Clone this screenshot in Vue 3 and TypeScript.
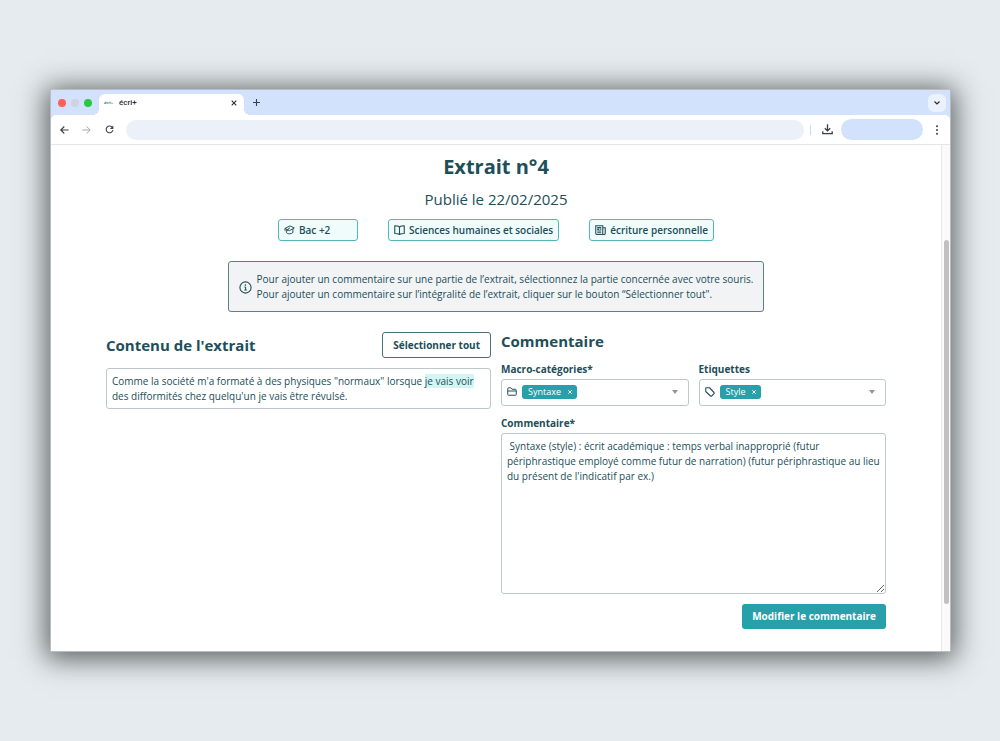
<script setup lang="ts">
import { ref } from 'vue'

interface TagField {
  id: string
  label: string
  icon: 'folder' | 'tag'
  tags: string[]
  options: string[]
}

const fields = ref<TagField[]>([
  { id: 'macro', label: 'Macro-catégories*', icon: 'folder', tags: ['Syntaxe'], options: ['Syntaxe', 'Lexique', 'Orthographe'] },
  { id: 'labels', label: 'Etiquettes', icon: 'tag', tags: ['Style'], options: ['Style', 'Accord', 'Temps'] },
])

const comment = ref(
  " Syntaxe (style) : écrit académique : temps verbal inapproprié (futur périphrastique employé comme futur de narration) (futur périphrastique au lieu du présent de l'indicatif par ex.)",
)

function removeTag(field: TagField, tag: string): void {
  field.tags = field.tags.filter((t) => t !== tag)
}

function addTag(field: TagField, event: Event): void {
  const select = event.target as HTMLSelectElement
  if (select.value && !field.tags.includes(select.value)) field.tags.push(select.value)
  select.value = ''
}
</script>

<template>
  <div class="desktop">
    <div class="window">
      <div class="chrome">
        <header class="tabstrip">
          <div class="lights">
            <span class="light red"></span>
            <span class="light grey"></span>
            <span class="light green"></span>
          </div>
          <div class="tab">
            <svg class="favicon" viewBox="0 0 11 6" aria-hidden="true">
              <text x="0" y="4" class="logo"><tspan fill="#1f8f8f">éc</tspan><tspan fill="#3c9a6e">ri</tspan><tspan fill="#ee8a2c">+</tspan></text>
            </svg>
            <span class="tab-title">écri+</span>
            <button class="icon-btn" type="button" aria-label="Fermer l'onglet">
              <svg width="6" height="6" viewBox="0 0 6 6"><path d="M.7.7l4.6 4.6M5.3.7L.7 5.3" stroke="#2b2d30" stroke-width="1.1" /></svg>
            </button>
          </div>
          <button class="icon-btn new-tab" type="button" aria-label="Nouvel onglet">
            <svg width="7" height="7" viewBox="0 0 7 7"><path d="M3.5 0v7M0 3.5h7" stroke="#3c4043" stroke-width="1.1" /></svg>
          </button>
          <button class="icon-btn tab-menu" type="button" aria-label="Rechercher dans les onglets">
            <svg width="6" height="4" viewBox="0 0 6 4"><path d="M.5.5L3 3 5.5.5" fill="none" stroke="#2b2d30" stroke-width="1.2" /></svg>
          </button>
        </header>

        <nav class="toolbar">
          <button class="icon-btn" type="button" aria-label="Précédent">
            <svg width="9" height="8" viewBox="0 0 9 8"><path d="M8.6 4H1M4.3.5L.8 4l3.5 3.5" fill="none" stroke="#3c4043" stroke-width="1.1" /></svg>
          </button>
          <button class="icon-btn forward" type="button" aria-label="Suivant">
            <svg width="9" height="8" viewBox="0 0 9 8"><path d="M.4 4H8M4.7.5L8.2 4 4.7 7.5" fill="none" stroke="#a6a8ab" stroke-width="1" /></svg>
          </button>
          <button class="icon-btn reload" type="button" aria-label="Actualiser">
            <svg width="9" height="9" viewBox="0 0 9 9"><path d="M7.3 2.3A3.4 3.4 0 1 0 7.9 5.2" fill="none" stroke="#3c4043" stroke-width="1.1" /><path d="M8.3.5v3.5H4.9z" fill="#3c4043" /></svg>
          </button>
          <input class="address" type="text" aria-label="Adresse" />
          <span class="divider"></span>
          <button class="icon-btn" type="button" aria-label="Téléchargements">
            <svg width="11" height="11" viewBox="0 0 11 11"><path d="M5.5.3v6.5M2.8 4.2l2.7 2.7 2.7-2.7M.8 7.3v2.4h9.4V7.3" fill="none" stroke="#3c4043" stroke-width="1.3" /></svg>
          </button>
          <button class="profile" type="button" aria-label="Profil"></button>
          <button class="icon-btn" type="button" aria-label="Menu">
            <svg width="4" height="10" viewBox="0 0 4 10" fill="#3c4043"><circle cx="2" cy="1.3" r="1" /><circle cx="2" cy="5" r="1" /><circle cx="2" cy="8.7" r="1" /></svg>
          </button>
        </nav>
      </div>

      <div class="viewport">
        <main class="content">
          <h1>Extrait n°4</h1>
          <p class="date">Publié le 22/02/2025</p>

          <ul class="chips">
            <li class="chip">
              <svg width="11" height="10" viewBox="0 0 24 22" fill="none" stroke="#264f59" stroke-width="2.2" stroke-linejoin="round"><path d="M2 7.5L13 2l9.5 4.5L12 12.5zM5 10v6.5c2 2.5 5 3 7.5 2.8 3-.2 5.5-1.3 7-3V9M2 7.5v5" /><path d="M13 6.5l-5 3v4" /></svg>
              Bac +2
            </li>
            <li class="chip">
              <svg width="11" height="10" viewBox="0 0 22 20" fill="none" stroke="#264f59" stroke-width="2.2" stroke-linejoin="round"><path d="M11 4C9 2 6 1.5 1.5 1.5V17C6 17 9 17.5 11 19c2-1.5 5-2 9.5-2V1.5C16 1.5 13 2 11 4zM11 4v15" /></svg>
              Sciences humaines et sociales
            </li>
            <li class="chip">
              <svg width="11" height="10" viewBox="0 0 22 20" fill="none" stroke="#264f59" stroke-width="2.2"><path d="M1.5 1.5h14V19H4a2.5 2.5 0 0 1-2.5-2.5zM15.5 5.5h5v11A2.5 2.5 0 0 1 18 19h-4" /><path d="M4.5 5.2h8M4.5 12h8M4.5 15.5h8" /><path d="M4.5 8.7h4M10.5 8.7h2" stroke-width="3" /></svg>
              écriture personnelle
            </li>
          </ul>

          <div class="notice">
            <svg width="13" height="13" viewBox="0 0 13 13"><circle cx="6.5" cy="6.5" r="5.6" fill="none" stroke="#264f59" stroke-width="1.1" /><circle cx="6.4" cy="4.1" r=".8" fill="#264f59" /><path d="M5.4 6h1.2v3M5.3 9h2.5" fill="none" stroke="#264f59" stroke-width="1" /></svg>
            <p>
              Pour ajouter un commentaire sur une partie de l’extrait, sélectionnez la partie concernée avec votre souris.<br />
              Pour ajouter un commentaire sur l’intégralité de l’extrait, cliquer sur le bouton “Sélectionner tout".
            </p>
          </div>

          <div class="columns">
            <section>
              <div class="extract-head">
                <h2>Contenu de l'extrait</h2>
                <button class="outline-btn" type="button">Sélectionner tout</button>
              </div>
              <p class="extract">Comme la société m'a formaté à des physiques "normaux" lorsque <mark>je vais voir</mark> des difformités chez quelqu'un je vais être révulsé.</p>
            </section>

            <form @submit.prevent>
              <h2>Commentaire</h2>
              <div class="fields">
                <div v-for="field in fields" :key="field.id" class="field">
                  <label :for="field.id">{{ field.label }}</label>
                  <div class="combo">
                    <svg v-if="field.icon === 'folder'" width="10" height="9" viewBox="0 0 20 18" fill="none" stroke="#264f59" stroke-width="2" stroke-linejoin="round"><path d="M1.5 15V3.5a2 2 0 0 1 2-2h4l2.5 3h6.5a2 2 0 0 1 2 2V15a1.5 1.5 0 0 1-1.5 1.5H3A1.5 1.5 0 0 1 1.5 15zM1.5 8h17" /></svg>
                    <svg v-else width="10" height="10" viewBox="0 0 20 20" fill="none" stroke="#264f59" stroke-width="2.2" stroke-linejoin="round"><path d="M1.5 2.5a1 1 0 0 1 1-1H9L18 11a1.8 1.8 0 0 1 0 2.4L13.4 18a1.8 1.8 0 0 1-2.4 0L1.5 9z" /></svg>
                    <span v-for="tag in field.tags" :key="tag" class="tag">
                      {{ tag }}
                      <button type="button" :aria-label="`Retirer ${tag}`" @click="removeTag(field, tag)">
                        <svg width="4" height="4" viewBox="0 0 4 4"><path d="M.3.3l3.4 3.4M3.7.3L.3 3.7" stroke="#fff" stroke-width="1" /></svg>
                      </button>
                    </span>
                    <select :id="field.id" @change="addTag(field, $event)">
                      <option value=""></option>
                      <option v-for="option in field.options" :key="option" :value="option">{{ option }}</option>
                    </select>
                    <svg class="arrow" width="6" height="4" viewBox="0 0 6 4"><path d="M0 0h6L3 4z" fill="#959595" /></svg>
                  </div>
                </div>
              </div>
              <label for="comment">Commentaire*</label>
              <textarea id="comment" v-model="comment"></textarea>
              <button class="submit" type="submit">Modifier le commentaire</button>
            </form>
          </div>
        </main>
        <div class="scrollbar"><span class="thumb"></span></div>
      </div>
    </div>
  </div>
</template>

<style>
body {
  margin: 0;
  background: #e6ebef;
}
</style>

<style scoped>
.desktop {
  box-sizing: border-box;
  min-height: 100vh;
  padding: 89px 49px 89px 50px;
  background: #e6ebef;
  color: #214e58;
  font-family: "Open Sans", "Noto Sans", sans-serif;
  font-size: 10px;
  line-height: 15px;
}

.window {
  border: 1px solid #b9bdc3;
  background: #fff;
  box-shadow: 0 3px 26px 4px rgba(30, 36, 36, 0.7);
}

button,
input,
select,
textarea {
  font: inherit;
  color: inherit;
}

svg {
  display: block;
  flex: none;
}

.icon-btn {
  display: flex;
  align-items: center;
  justify-content: center;
  padding: 0;
  border: 0;
  background: none;
}

.chrome {
  background: #d2e2fd;
}

.tabstrip {
  display: flex;
  align-items: center;
  height: 25px;
  padding: 0 4px 0 7px;
}

.lights {
  display: flex;
  gap: 5px;
}

.light {
  width: 8px;
  height: 8px;
  border-radius: 50%;
}

.red {
  background: #ff5f57;
}

.grey {
  background: #cdd3df;
}

.green {
  background: #28c840;
}

.tab {
  position: relative;
  display: flex;
  align-items: center;
  align-self: flex-end;
  box-sizing: border-box;
  width: 145px;
  height: 21px;
  margin-left: 7px;
  padding: 0 7px 4px 5px;
  border-radius: 6px 6px 0 0;
  background: #fff;
}

.tab::before,
.tab::after {
  content: "";
  position: absolute;
  bottom: 0;
  width: 6px;
  height: 6px;
}

.tab::before {
  right: 100%;
  background: radial-gradient(circle at 0 0, transparent 6px, #fff 6px);
}

.tab::after {
  left: 100%;
  background: radial-gradient(circle at 100% 0, transparent 6px, #fff 6px);
}

.favicon {
  width: 11px;
  height: 6px;
}

.logo {
  font: italic bold 4px "Noto Sans", sans-serif;
}

.tab-title {
  flex: 1;
  margin-left: 4px;
  color: #2b2d30;
  font-family: Roboto, sans-serif;
  font-size: 8px;
  font-weight: 500;
  line-height: 12px;
}

.new-tab {
  margin-left: 9px;
}

.tab-menu {
  width: 18px;
  height: 18px;
  margin-left: auto;
  border-radius: 6px;
  background: #ebf1fd;
}

.toolbar {
  display: flex;
  align-items: center;
  height: 29px;
  padding: 0 11px 0 9px;
  border-bottom: 1px solid #e4e6ea;
  border-radius: 5px 5px 0 0;
  background: #fff;
}

.forward {
  margin-left: 13px;
}

.reload {
  margin-left: 14px;
}

.address {
  flex: 1;
  min-width: 0;
  height: 20px;
  margin-left: 12px;
  padding: 0 10px;
  border: 0;
  border-radius: 10px;
  background: #ebf0f9;
}

.divider {
  width: 1px;
  height: 10px;
  margin: 0 11px 0 6px;
  background: #c6dafa;
}

.profile {
  width: 82px;
  height: 21px;
  margin: 0 12px 0 8px;
  border: 0;
  border-radius: 11px;
  background: #d2e2fc;
}

.viewport {
  display: flex;
}

.content {
  flex: 1;
  min-width: 0;
  padding: 8px 55px 22px;
}

.scrollbar {
  display: flex;
  flex-direction: column;
  align-items: center;
  box-sizing: border-box;
  width: 9px;
  padding: 95px 0 47px;
  border-left: 1px solid #e8e8e8;
  background: #fafafa;
}

.thumb {
  flex: 1;
  width: 5px;
  border-radius: 3px;
  background: #c1c1c1;
}

h1,
h2,
p,
ul {
  margin: 0;
}

h1 {
  font-size: 20px;
  font-weight: 700;
  line-height: 27px;
  text-align: center;
}

h2 {
  font-size: 15px;
  font-weight: 700;
  line-height: 19px;
}

.date {
  margin-top: 9px;
  font-size: 15px;
  line-height: 20px;
  text-align: center;
}

.chips {
  display: flex;
  justify-content: center;
  gap: 30px;
  margin-top: 10px;
  padding: 0;
  list-style: none;
}

.chip {
  display: flex;
  align-items: center;
  gap: 4px;
  box-sizing: border-box;
  min-width: 80px;
  height: 22px;
  padding: 0 5px;
  border: 1px solid #53b5bc;
  border-radius: 3px;
  background: #effcfb;
  font-weight: 600;
}

.notice {
  display: flex;
  align-items: center;
  gap: 5px;
  width: fit-content;
  margin: 20px auto 0;
  padding: 10px 10px 9px;
  border: 1px solid #5f7f86;
  border-radius: 3px;
  background: #f2f3f5;
}

.columns {
  display: grid;
  grid-template-columns: 1fr 1fr;
  gap: 10px;
  margin-top: 20px;
}

.extract-head {
  display: flex;
  align-items: center;
  justify-content: space-between;
}

.outline-btn {
  height: 26px;
  padding: 0 10px;
  border: 1px solid #4c6f77;
  border-radius: 3px;
  background: #fff;
  font-weight: 700;
}

.extract {
  margin-top: 10px;
  padding: 5px 5px 4px;
  border: 1px solid #bcc8cb;
  border-radius: 3px;
}

mark {
  background: #d3f5f3;
  color: inherit;
}

form {
  display: flex;
  flex-direction: column;
}

.fields {
  display: grid;
  grid-template-columns: 1fr 1fr;
  gap: 10px;
  margin: 11px 0 10px;
}

.field {
  display: flex;
  flex-direction: column;
}

label {
  font-weight: 700;
}

.combo {
  display: flex;
  align-items: center;
  box-sizing: border-box;
  height: 27px;
  margin-top: 2px;
  padding: 0 10px 2px 5px;
  border: 1px solid #bcc8cb;
  border-radius: 3px;
}

.tag {
  display: flex;
  align-items: center;
  gap: 7px;
  height: 14px;
  margin-left: 5px;
  padding: 0 5px 0 6px;
  border-radius: 3px;
  background: #27a0a9;
  color: #fff;
  font-size: 9px;
}

.tag button {
  padding: 0;
  border: 0;
  background: none;
}

.combo select {
  flex: 1;
  min-width: 0;
  height: 20px;
  border: 0;
  outline: 0;
  appearance: none;
  background: transparent;
}

textarea {
  box-sizing: border-box;
  width: 100%;
  height: 161px;
  margin: 2px 0 10px;
  padding: 5px 4px 5px 5px;
  border: 1px solid #bcc8cb;
  border-radius: 3px;
  outline: 0;
  background: #fff;
  resize: both;
}

.submit {
  align-self: flex-end;
  height: 25px;
  padding: 0 10px;
  border: 0;
  border-radius: 3px;
  background: #27a0a9;
  color: #fff;
  font-weight: 700;
}
</style>
